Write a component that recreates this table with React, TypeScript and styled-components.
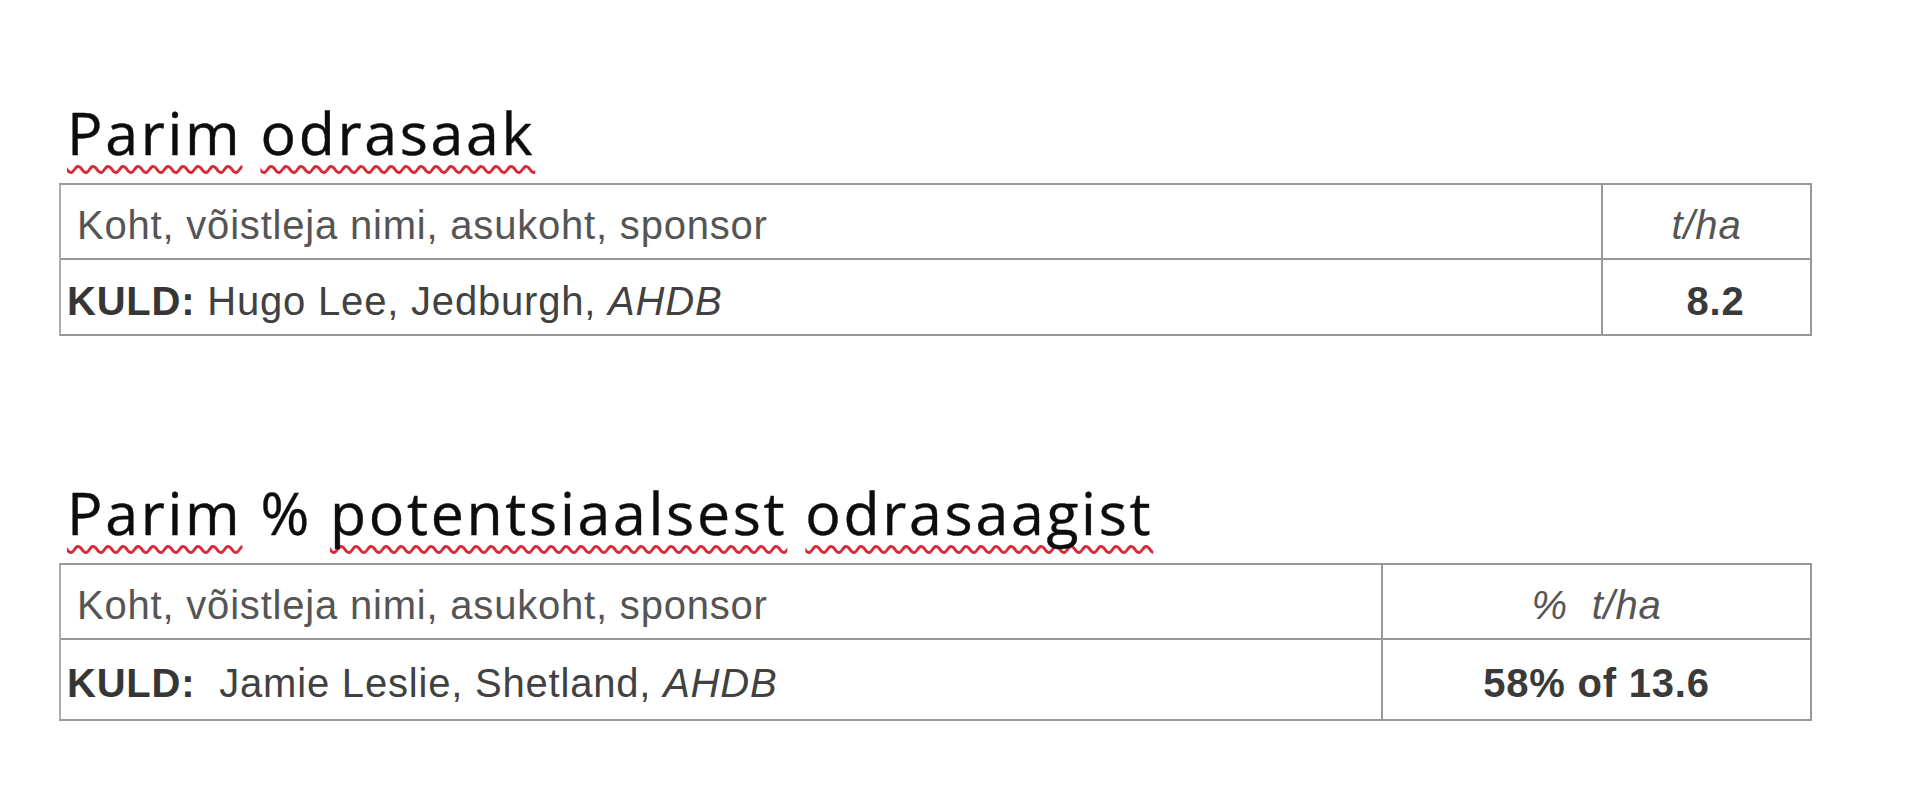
import React from "react";
import styled, { createGlobalStyle } from "styled-components";

const Global = createGlobalStyle`
  html, body { margin: 0; padding: 0; background: #ffffff; }
  body { width: 1920px; height: 792px; overflow: hidden; }
`;

const Page = styled.div`
  padding: 92px 0 0 59px;
  display: flex;
  flex-direction: column;
`;

const Section = styled.section<{ $gap: number }>`
  display: flex;
  flex-direction: column;
  margin-top: ${(p) => p.$gap}px;
`;

const Title = styled.h2`
  margin: 0 0 11px 8px;
  font-family: "Open Sans", "Noto Sans", sans-serif;
  font-weight: 400;
  font-size: 59px;
  line-height: 80px;
  letter-spacing: 2.7px;
  color: #0d0d0d;
  -webkit-text-stroke: 0.4px #0d0d0d;
`;

const Misspelled = styled.span`
  text-decoration-line: underline;
  text-decoration-style: wavy;
  text-decoration-color: #d92a3c;
  text-decoration-thickness: 2.5px;
  text-decoration-skip-ink: none;
  text-underline-offset: 10px;
`;

const Grid = styled.div<{ $first: number }>`
  display: grid;
  grid-template-columns: ${(p) => p.$first}px 1fr;
  width: 1749px;
  border: 2px solid #989898;
  border-left-color: #acacac;
  font-family: "Liberation Sans", Arial, sans-serif;
  font-size: 40px;
  letter-spacing: 0.8px;
`;

const Cell = styled.div<{
  $h: number;
  $last?: boolean;
  $bottom?: boolean;
  $center?: boolean;
  $pl?: number;
  $tone?: "head" | "body";
}>`
  height: ${(p) => p.$h}px;
  display: flex;
  align-items: center;
  justify-content: ${(p) => (p.$center ? "center" : "flex-start")};
  padding: 7px 0 0 ${(p) => p.$pl ?? 0}px;
  box-sizing: border-box;
  border-right: ${(p) => (p.$last ? "none" : "2px solid #989898")};
  border-bottom: ${(p) => (p.$bottom ? "2px solid #989898" : "none")};
  color: ${(p) => (p.$tone === "head" ? "#555555" : "#414141")};
  white-space: pre;
  line-height: 1.15;
`;

const Strong = styled.b`
  font-weight: 700;
  color: #363636;
`;

const Em = styled.i`
  font-style: italic;
`;

const Value = styled.b`
  font-weight: 700;
  color: #3a3a3a;
`;

export default function App() {
  return (
    <>
      <Global />
      <Page>
        <Section $gap={0}>
          <Title>
            <Misspelled>Parim</Misspelled> <Misspelled>odrasaak</Misspelled>
          </Title>
          <Grid $first={1542}>
            <Cell $h={75} $bottom $pl={16} $tone="head">
              Koht, võistleja nimi, asukoht, sponsor
            </Cell>
            <Cell $h={75} $bottom $last $center $tone="head">
              <Em>t/ha</Em>
            </Cell>
            <Cell $h={74} $pl={6} $tone="body">
              <Strong>KULD:</Strong> Hugo Lee, Jedburgh, <Em>AHDB</Em>
            </Cell>
            <Cell $h={74} $last $center $pl={18} $tone="body">
              <Value>8.2</Value>
            </Cell>
          </Grid>
        </Section>
        <Section $gap={136}>
          <Title>
            <Misspelled>Parim</Misspelled> %{" "}
            <Misspelled>potentsiaalsest</Misspelled>{" "}
            <Misspelled>odrasaagist</Misspelled>
          </Title>
          <Grid $first={1322}>
            <Cell $h={75} $bottom $pl={16} $tone="head">
              Koht, võistleja nimi, asukoht, sponsor
            </Cell>
            <Cell $h={75} $bottom $last $center $tone="head">
              <Em>{"%  t/ha"}</Em>
            </Cell>
            <Cell $h={79} $pl={6} $tone="body">
              <Strong>KULD:</Strong>
              {"  Jamie Leslie, Shetland, "}
              <Em>AHDB</Em>
            </Cell>
            <Cell $h={79} $last $center $tone="body">
              <Value>58% of 13.6</Value>
            </Cell>
          </Grid>
        </Section>
      </Page>
    </>
  );
}
